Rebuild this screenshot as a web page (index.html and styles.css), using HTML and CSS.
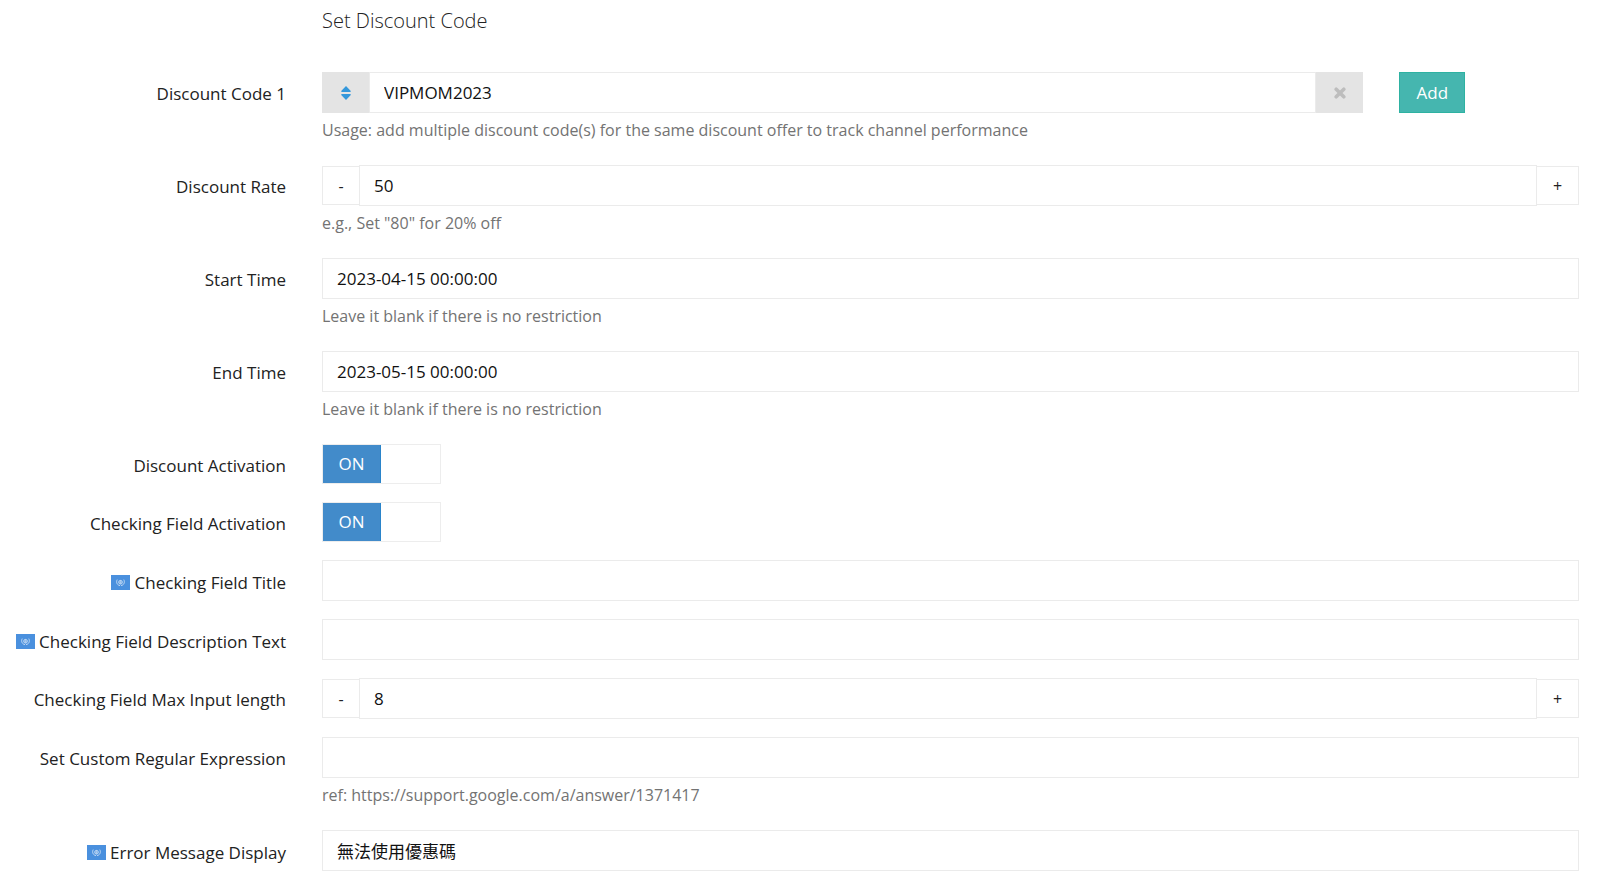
FILE: index.html
```html
<!DOCTYPE html>
<html lang="en">

<head>
    <meta charset="utf-8">
    <title>Set Discount Code</title>
    <link rel="stylesheet" href="styles.css">
</head>

<body>
    <svg width="0" height="0" class="sprite">
        <symbol id="flag" viewBox="0 0 19 15">
            <rect width="19" height="15" fill="#4a90de" />
            <g fill="none" stroke="#fff" stroke-width="0.8" opacity="0.8">
                <circle cx="9.5" cy="7.2" r="1.8" />
                <path d="M9.5 5.2v4M7.7 7.2h3.6" stroke-width="0.5" />
                <path d="M6.2 4.6C4.8 7.4 6.2 10.2 9 10.6M12.8 4.6C14.2 7.4 12.8 10.2 10 10.6" />
            </g>
        </symbol>
    </svg>

    <form class="form">
        <h2 class="title">Set Discount Code</h2>

        <div class="row">
            <label class="label" for="code">Discount Code 1</label>
            <div class="field">
                <div class="code-row">
                    <div class="code-col">
                        <div class="group">
                            <button type="button" class="addon" aria-label="Sort">
                                <svg width="10" height="14" viewBox="0 0 10 14" fill="#3498db">
                                    <path d="M5 0L9.8 5Q10 6 9 6H1Q0 6 .2 5zM5 14L9.8 9Q10 8 9 8H1Q0 8 .2 9z" />
                                </svg>
                            </button>
                            <input type="text" class="input" id="code" value="VIPMOM2023">
                            <button type="button" class="addon" aria-label="Remove">
                                <svg width="12" height="12" viewBox="0 0 12 12" stroke="#bdbdbd" stroke-width="3.6" stroke-linecap="round">
                                    <path d="M2.2 2.2L9.8 9.8M9.8 2.2L2.2 9.8" />
                                </svg>
                            </button>
                        </div>
                    </div>
                    <button type="button" class="add">Add</button>
                </div>
                <p class="help">Usage: add multiple discount code(s) for the same discount offer to track channel performance</p>
            </div>
        </div>

        <div class="row">
            <label class="label" for="rate">Discount Rate</label>
            <div class="field">
                <div class="group">
                    <button type="button" class="step minus">-</button>
                    <input type="text" class="input" id="rate" value="50">
                    <button type="button" class="step plus">+</button>
                </div>
                <p class="help">e.g., Set "80" for 20% off</p>
            </div>
        </div>

        <div class="row">
            <label class="label" for="start">Start Time</label>
            <div class="field">
                <input type="text" class="input" id="start" value="2023-04-15 00:00:00">
                <p class="help">Leave it blank if there is no restriction</p>
            </div>
        </div>

        <div class="row">
            <label class="label" for="end">End Time</label>
            <div class="field">
                <input type="text" class="input" id="end" value="2023-05-15 00:00:00">
                <p class="help">Leave it blank if there is no restriction</p>
            </div>
        </div>

        <div class="row">
            <label class="label" for="active">Discount Activation</label>
            <div class="field">
                <label class="switch">
                    <input type="checkbox" id="active" checked>
                    <span class="on">ON</span>
                </label>
            </div>
        </div>

        <div class="row">
            <label class="label" for="checking">Checking Field Activation</label>
            <div class="field">
                <label class="switch">
                    <input type="checkbox" id="checking" checked>
                    <span class="on">ON</span>
                </label>
            </div>
        </div>

        <div class="row">
            <label class="label label-flag" for="field-title"><svg class="flag"><use href="#flag" /></svg> Checking Field Title</label>
            <div class="field">
                <input type="text" class="input" id="field-title">
            </div>
        </div>

        <div class="row">
            <label class="label label-flag" for="description"><svg class="flag"><use href="#flag" /></svg> Checking Field Description Text</label>
            <div class="field">
                <input type="text" class="input" id="description">
            </div>
        </div>

        <div class="row">
            <label class="label" for="length">Checking Field Max Input length</label>
            <div class="field">
                <div class="group">
                    <button type="button" class="step minus">-</button>
                    <input type="text" class="input" id="length" value="8">
                    <button type="button" class="step plus">+</button>
                </div>
            </div>
        </div>

        <div class="row">
            <label class="label" for="regex">Set Custom Regular Expression</label>
            <div class="field">
                <input type="text" class="input" id="regex">
                <p class="help">ref: https://support.google.com/a/answer/1371417</p>
            </div>
        </div>

        <div class="row">
            <label class="label label-flag" for="error"><svg class="flag"><use href="#flag" /></svg> Error Message Display</label>
            <div class="field">
                <input type="text" class="input" id="error" value="無法使用優惠碼">
            </div>
        </div>
    </form>
</body>

</html>
```

FILE: styles.css
```css
* {
    box-sizing: border-box;
}

body {
    margin: 0;
    background-color: #fff;
    color: #222;
    font-family: "Open Sans", "Noto Sans CJK TC", sans-serif;
    font-size: 17px;
    line-height: 24px;
}

.sprite {
    display: block;
}

.form {
    padding: 9px 21px 0 0;
}

.title {
    margin: 0 0 39px 322px;
    font-size: 20px;
    font-weight: 300;
    line-height: 24px;
}

.row {
    display: grid;
    grid-template-columns: 286px 1fr;
    gap: 36px;
    margin-bottom: 18px;
}

.label {
    padding-top: 10px;
    text-align: right;
    white-space: nowrap;
}

.label-flag {
    padding-top: 11px;
}

.flag {
    width: 19px;
    height: 15px;
    vertical-align: -1px;
}

.input {
    display: block;
    width: 100%;
    height: 41px;
    padding: 0 14px;
    border: 1px solid #ebebeb;
    border-radius: 0;
    background-color: #fff;
    color: #111;
    font: inherit;
}

.help {
    margin: 0;
    padding-top: 5px;
    height: 34px;
    color: #737373;
    font-size: 16px;
}

.group {
    display: flex;
    align-items: center;
}

.group .input {
    flex: 1;
    min-width: 0;
}

.code-row {
    display: flex;
    margin: 0 -18px;
}

.code-col {
    width: 83.3333%;
    padding: 0 18px;
}

.addon {
    display: flex;
    align-items: center;
    justify-content: center;
    width: 47px;
    height: 41px;
    padding: 0;
    border: 1px solid #e4e4e4;
    background-color: #e4e4e4;
}

.add {
    height: 41px;
    margin-left: 18px;
    padding: 0 16px;
    border: 1px solid #2eb2a2;
    background-color: #45b6af;
    color: #fff;
    font: inherit;
    font-weight: 500;
}

.step {
    height: 39px;
    padding: 0;
    border: 1px solid #ebebeb;
    background-color: #fff;
    color: #222;
    font: inherit;
    font-size: 16px;
}

.minus {
    width: 37px;
    border-right: none;
}

.plus {
    width: 42px;
    border-left: none;
}

.switch {
    display: block;
    position: relative;
    width: 119px;
    height: 40px;
    border: 1px solid #ededed;
}

.switch input {
    position: absolute;
    inset: 0;
    width: 100%;
    height: 100%;
    margin: 0;
    opacity: 0;
}

.on {
    display: block;
    width: 58px;
    border-right: 1px solid #2a84ca;
    background-color: #428bca;
    color: #fff;
    font-weight: 500;
    line-height: 38px;
    text-align: center;
}
```
